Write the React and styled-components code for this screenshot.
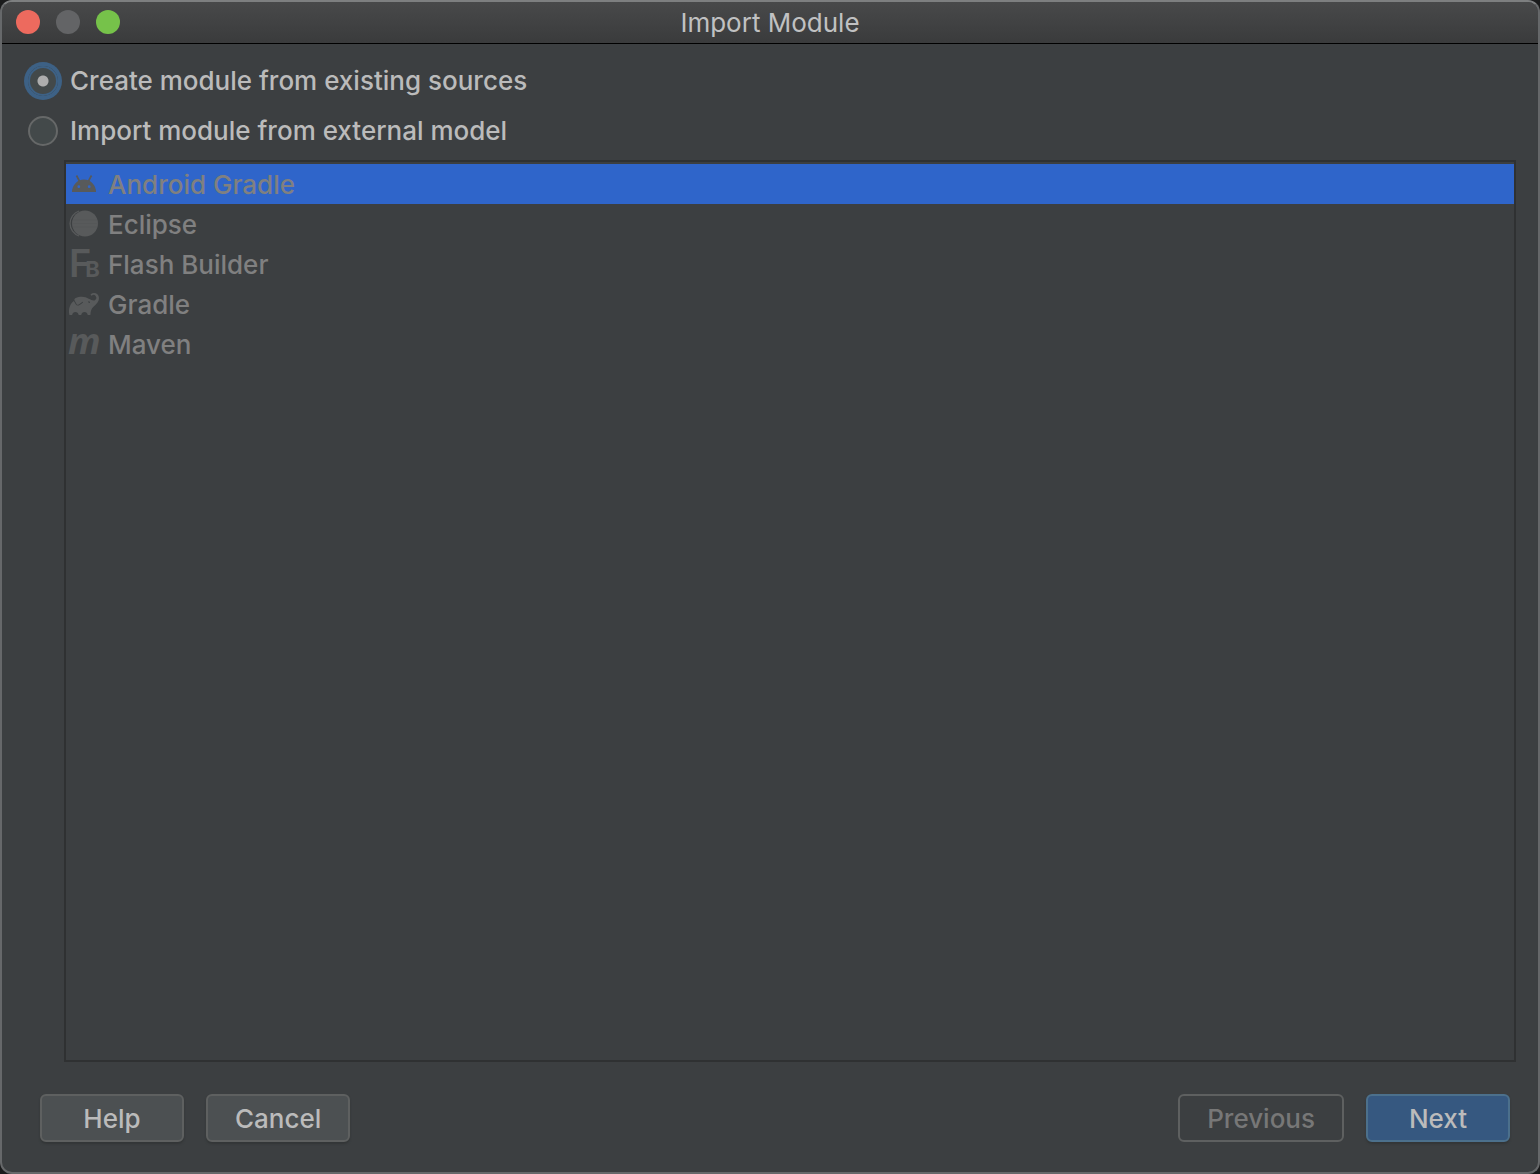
import { useState } from "react";
import styled, { createGlobalStyle } from "styled-components";
import { SiGradle } from "react-icons/si";

const GlobalStyle = createGlobalStyle`
  * {
    box-sizing: border-box;
  }
  body {
    margin: 0;
    background: #1a1b1c;
    font-family: Inter, "Liberation Sans", sans-serif;
    font-size: 26px;
    font-weight: 500;
    line-height: 32px;
    color: #bbbbbb;
  }
`;

const Dialog = styled.div`
  display: flex;
  flex-direction: column;
  min-height: 100vh;
  overflow: hidden;
  background: #3c3f41;
  border: 2px solid #66686a;
  border-top-color: #7d7f80;
  border-radius: 12px;
`;

const TitleBar = styled.header`
  display: grid;
  grid-template-columns: 1fr auto 1fr;
  align-items: center;
  height: 42px;
  padding: 0 14px;
  background: linear-gradient(#48494a, #3a3b3c);
  border-bottom: 1px solid #000;
`;

const TrafficLights = styled.div`
  display: flex;
  gap: 16px;
  padding-bottom: 2px;
`;

const Light = styled.button`
  width: 24px;
  height: 24px;
  padding: 0;
  border: none;
  border-radius: 50%;
  background: ${({ $color }) => $color};
`;

const Title = styled.h1`
  margin: 0;
  font-size: 26px;
  font-weight: 400;
  line-height: 32px;
  color: #c0c1c2;
`;

const Content = styled.form`
  display: flex;
  flex: 1;
  flex-direction: column;
`;

const RadioGroup = styled.div`
  display: flex;
  flex-direction: column;
  gap: 18px;
  padding: 21px 26px 13px;
`;

const RadioLabel = styled.label`
  display: flex;
  align-items: center;
  gap: 12px;
`;

const Radio = styled.input.attrs({ type: "radio" })`
  appearance: none;
  width: 30px;
  height: 30px;
  margin: 0;
  border: 2px solid #666868;
  border-radius: 50%;
  background: #43494a;
  outline: none;

  &:checked {
    border-color: #3d6185;
    background: radial-gradient(circle, #adadad 5px, #43494a 6px);
    box-shadow: 0 0 0 4px #3d6185;
  }
`;

const ModelList = styled.ul`
  flex: 1;
  margin: 0 22px 0 62px;
  padding: 2px 0;
  border: 2px solid #2f3132;
  list-style: none;
`;

const ModelItem = styled.li`
  display: flex;
  align-items: center;
  gap: 8px;
  height: 40px;
  padding: 0 2px;
  color: #808080;
  background: ${({ $selected }) => ($selected ? "#2f65ca" : "transparent")};

  svg {
    flex: none;
    width: 32px;
    height: 32px;
    padding: 1px;
    overflow: visible;
    color: #585a5b;
  }
`;

const ModelName = styled.span`
  padding-top: 2px;
`;

const Footer = styled.footer`
  display: flex;
  gap: 22px;
  padding: 32px 28px 30px 38px;
`;

const Spacer = styled.div`
  flex: 1;
`;

const Button = styled.button`
  min-width: 144px;
  height: 48px;
  padding: 2px 27px 0;
  border: 2px solid #5e6060;
  border-radius: 6px;
  background: #4c5052;
  box-shadow: 0 2px 2px #333637;
  font: inherit;
  color: #bbbbbb;

  &:disabled {
    background: transparent;
    box-shadow: none;
    color: #777777;
  }
`;

const PrimaryButton = styled(Button)`
  border-color: #4c708c;
  background: #365880;
`;

function AndroidIcon() {
  return (
    <svg viewBox="0 0 30 30" aria-hidden="true">
      <path d="M7.5 6.5l3.2 6M22.5 6.5l-3.2 6" stroke="currentColor" strokeWidth="1.7" />
      <path
        fill="currentColor"
        fillRule="evenodd"
        d="M3 23a12 12.5 0 0 1 24 0zM9.8 16.3a1.4 1.4 0 1 0 0 2.8 1.4 1.4 0 0 0 0-2.8zM20.2 16.3a1.4 1.4 0 1 0 0 2.8 1.4 1.4 0 0 0 0-2.8z"
      />
    </svg>
  );
}

function EclipseIcon() {
  return (
    <svg viewBox="0 0 30 30" aria-hidden="true">
      <path d="M10 2a13.2 13.2 0 0 0 0 25" fill="none" stroke="currentColor" strokeWidth="1.3" />
      <circle cx="16" cy="14.5" r="13" fill="currentColor" />
      <path d="M4 11h24M3.5 14.5h25M4 18h24" stroke="#555758" strokeWidth="1" />
    </svg>
  );
}

function FlashBuilderIcon() {
  return (
    <svg viewBox="0 0 30 30" fill="currentColor" aria-hidden="true">
      <text x="0" y="28" fontFamily="Inter, sans-serif" fontSize="38" fontWeight="600">
        F
        <tspan dx="-6" fontSize="22" fontWeight="700">B</tspan>
      </text>
    </svg>
  );
}

function MavenIcon() {
  return (
    <svg viewBox="0 0 30 30" fill="currentColor" aria-hidden="true">
      <text x="-1" y="25" fontSize="36" fontFamily="Open Sans, sans-serif" fontStyle="italic" fontWeight="700">
        m
      </text>
    </svg>
  );
}

const sources = [
  { value: "existing", label: "Create module from existing sources" },
  { value: "external", label: "Import module from external model" },
];

const models = [
  { name: "Android Gradle", Icon: AndroidIcon },
  { name: "Eclipse", Icon: EclipseIcon },
  { name: "Flash Builder", Icon: FlashBuilderIcon },
  { name: "Gradle", Icon: SiGradle },
  { name: "Maven", Icon: MavenIcon },
];

function App() {
  const [source, setSource] = useState("existing");
  const [model, setModel] = useState("Android Gradle");
  const listDisabled = source !== "external";

  return (
    <>
      <GlobalStyle />
      <Dialog>
        <TitleBar>
          <TrafficLights>
            <Light $color="#ed6a5e" aria-label="Close" />
            <Light $color="#636466" aria-label="Minimize" disabled />
            <Light $color="#76c24a" aria-label="Zoom" />
          </TrafficLights>
          <Title>Import Module</Title>
        </TitleBar>
        <Content onSubmit={(e) => e.preventDefault()}>
          <RadioGroup>
            {sources.map(({ value, label }) => (
              <RadioLabel key={value} htmlFor={value}>
                <Radio
                  id={value}
                  name="source"
                  checked={source === value}
                  onChange={() => setSource(value)}
                />
                {label}
              </RadioLabel>
            ))}
          </RadioGroup>
          <ModelList role="listbox" aria-label="External model" aria-disabled={listDisabled}>
            {models.map(({ name, Icon }) => (
              <ModelItem
                key={name}
                role="option"
                aria-selected={model === name}
                $selected={model === name}
                onClick={() => !listDisabled && setModel(name)}
              >
                <Icon />
                <ModelName>{name}</ModelName>
              </ModelItem>
            ))}
          </ModelList>
          <Footer>
            <Button type="button">Help</Button>
            <Button type="button">Cancel</Button>
            <Spacer />
            <Button type="button" disabled>
              Previous
            </Button>
            <PrimaryButton type="submit">Next</PrimaryButton>
          </Footer>
        </Content>
      </Dialog>
    </>
  );
}

export default App;
